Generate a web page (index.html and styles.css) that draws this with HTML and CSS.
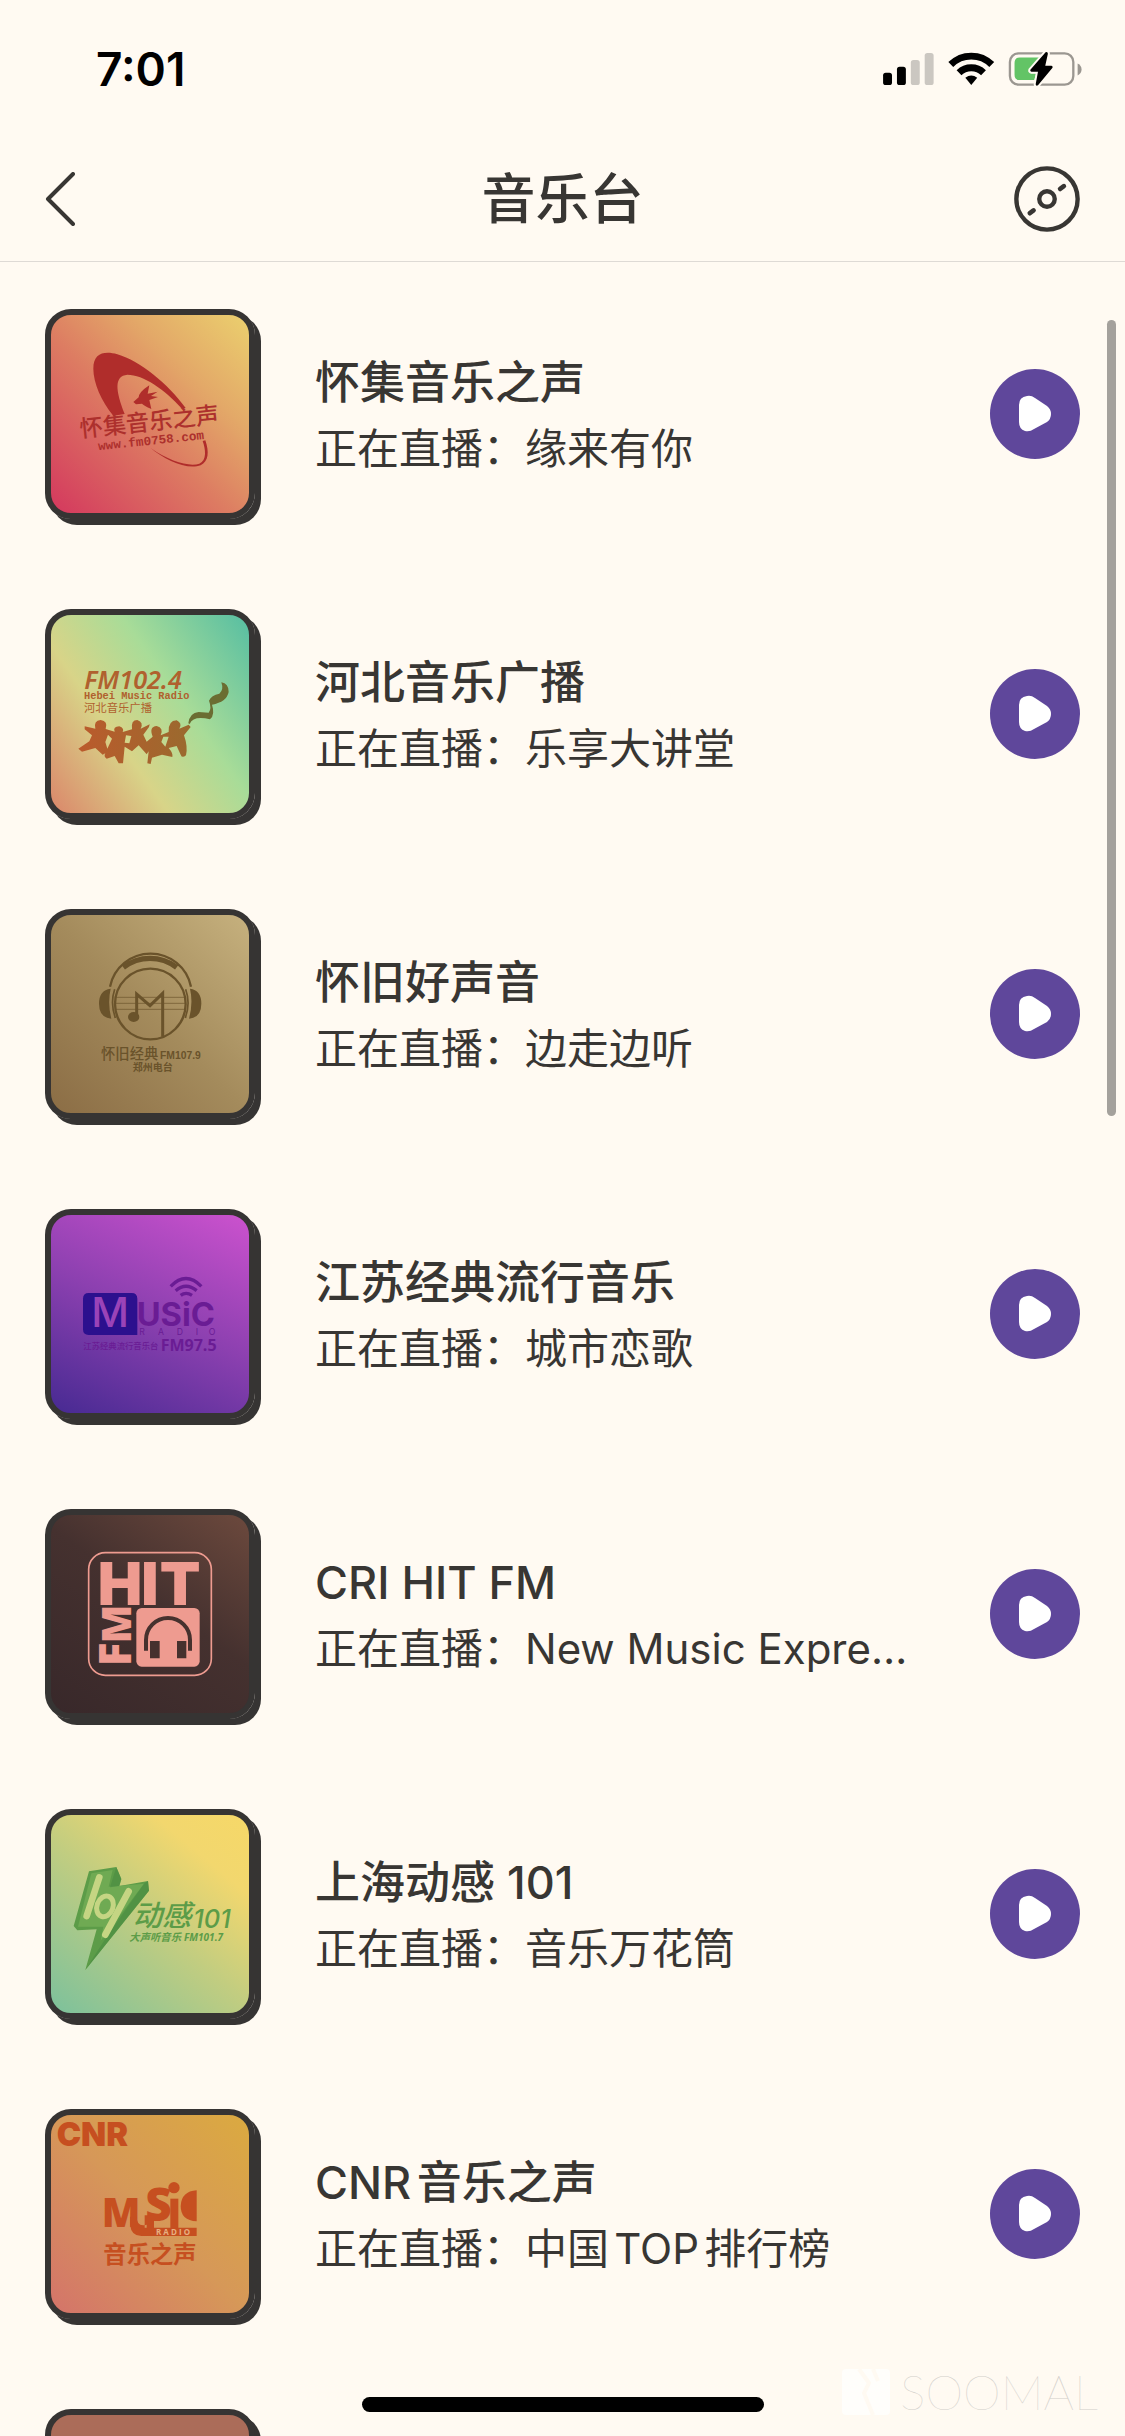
FILE: index.html
```html
<!DOCTYPE html>
<html lang="zh-CN">
<head>
<meta charset="utf-8">
<meta name="viewport" content="width=device-width, initial-scale=1">
<title>音乐台</title>
<link rel="stylesheet" href="styles.css">
</head>
<body>
<div class="screen">
  <div class="status-bar">
    <span class="time">7:01</span>
    <svg class="status-icons" viewBox="66 62 602 109" aria-hidden="true">
      <rect x="66" y="128" width="27" height="37" rx="8"/>
      <rect x="108" y="110" width="27" height="55" rx="8"/>
      <rect x="150" y="89" width="27" height="76" rx="8" fill="#cbc7c1"/>
      <rect x="192" y="68" width="27" height="97" rx="8" fill="#cbc7c1"/>
      <g fill="none" stroke="#000" stroke-width="21">
        <path d="M271 103A88 88 0 0 1 395 103"/>
        <path d="M296 128A53 53 0 0 1 370 128"/>
      </g>
      <path d="M315 143Q333 130 351 143L333 165Z"/>
      <rect x="450" y="69" width="192" height="95" rx="26" fill="none" stroke="#9b9791" stroke-width="7"/>
      <path d="M655 100Q667 106 667 118Q667 130 655 136Z" fill="#9b9791"/>
      <path d="M480 82H541L509 122L515 129H530L524 150H480Q464 150 464 134V98Q464 82 480 82Z" fill="#63c466"/>
      <path d="M558 66L512 119Q510 124 515 125H535L528 163Q529 170 535 166L579 113Q581 108 576 107H557L565 70Q564 62 558 66Z" stroke="#fffaf2" stroke-width="12" paint-order="stroke"/>
    </svg>
  </div>
  <header class="nav">
    <button class="icon-button" type="button" aria-label="返回">
      <svg class="back-icon" viewBox="0 0 30 54"><path d="M28 2L3 27L28 52" fill="none" stroke="#383633" stroke-width="4" stroke-linecap="round" stroke-linejoin="round"/></svg>
    </button>
    <h1>音乐台</h1>
    <button class="icon-button" type="button" aria-label="正在播放">
      <svg class="disc-icon" viewBox="0 0 196 196"><g fill="none" stroke="#383633" stroke-width="13" stroke-linecap="round"><circle cx="98" cy="98" r="91"/><circle cx="98" cy="98" r="23"/><path d="M137 68L148 60M47 140L58 132" stroke-width="14"/></g></svg>
    </button>
  </header>

  <main>
    <ul class="stations">
      <li class="station">
        <svg class="cover cover-huaiji" viewBox="63 75 594 594" role="img" aria-label="怀集音乐之声">
          <g fill="#b02d2b">
            <path d="M190 236C190 190 222 182 262 193C330 212 414 282 467 354L456 356C404 298 340 254 292 254C252 258 256 300 284 372L250 377C214 334 190 278 190 236Z"/>
            <path d="M310 336L326 322Q327 306 358 286L353 311L383 305L363 318L384 321L358 330L364 357Q341 346 336 341L318 343Z"/>
            <path d="M362 474C420 515 478 531 508 521C531 511 527 479 518 453L526 451C538 486 536 514 512 526C470 541 405 510 362 474Z"/>
          </g>
          <g fill="#ad302d" transform="rotate(-6 152 448)">
            <text class="cjk medium" x="152" y="442" font-size="70">怀集音乐之声</text>
            <text class="mono bold" x="202" y="486" font-size="38">www.fm0758.com</text>
          </g>
        </svg>
        <div class="info"><h2>怀集音乐之声</h2><p>正在直播：缘来有你</p></div>
        <button class="play" type="button" aria-label="播放怀集音乐之声"><svg viewBox="0 0 90 90"><path d="M29 27Q29 19 37 18Q41 17 45 20L57 28Q61 31 61 36Q61 41 57 44L44 51Q40 54 35 53Q29 51 29 44Z" transform="translate(0 9)"/></svg></button>
      </li>
      <li class="station">
        <svg class="cover cover-hebei" viewBox="63 75 594 594" role="img" aria-label="河北音乐广播">
          <defs><linearGradient id="crowd"><stop offset="0" stop-color="#bb5a2c"/><stop offset="1" stop-color="#9a6a2e"/></linearGradient></defs>
          <g fill="#b0612e">
            <text class="hand" x="163" y="297" font-size="76">FM102.4</text>
            <text class="mono bold" x="162" y="328" font-size="31">Hebei Music Radio</text>
            <text class="cjk" x="162" y="366" font-size="34">河北音乐广播</text>
          </g>
          <path fill="url(#crowd)" d="M164 409L196 416Q190 392 212 390Q235 393 227 417L254 425Q248 410 268 409Q284 415 278 426L306 418Q302 390 322 390Q342 397 332 416L359 403L357 411L340 434L350 455L368 440Q356 410 380 408Q402 414 392 436L416 426Q414 392 440 391Q458 400 448 416L476 404L482 411L462 436Q474 470 468 496Q456 506 452 494L440 468L416 474Q430 490 427 501L396 494L366 503L362 522L352 520L356 484L350 493L326 466L306 484L284 470L279 520L266 520L254 498L230 506Q220 500 226 490L218 494L196 474L156 485L145 476L178 454L186 436L164 418ZM234 434L226 456L232 476L246 446ZM288 436L284 458L298 460L304 438ZM400 440L394 456L406 470L416 440Z" fill-rule="evenodd"/>
          <path fill="#6b6d32" d="M475 400Q479 368 506 366L536 368Q546 355 537 332Q544 316 568 311Q582 300 574 277Q596 280 596 306Q590 336 546 344Q556 374 540 388Q490 376 479 402Z"/>
        </svg>
        <div class="info"><h2>河北音乐广播</h2><p>正在直播：乐享大讲堂</p></div>
        <button class="play" type="button" aria-label="播放河北音乐广播"><svg viewBox="0 0 90 90"><path d="M29 27Q29 19 37 18Q41 17 45 20L57 28Q61 31 61 36Q61 41 57 44L44 51Q40 54 35 53Q29 51 29 44Z" transform="translate(0 9)"/></svg></button>
      </li>
      <li class="station">
        <svg class="cover cover-huaijiu" viewBox="63 75 594 594" role="img" aria-label="怀旧好声音">
          <g fill="none" stroke="#6a532b">
            <circle cx="361" cy="342" r="106" stroke-width="7"/>
            <path d="M240 290A124 124 0 0 1 483 290" stroke-width="7"/>
            <path d="M280 232A132 132 0 0 1 440 232" stroke-width="16"/>
            <path d="M256 322H466M256 340H466M256 358H466" stroke-width="2"/>
            <path d="M320 380V312L360 347L398 310V440" stroke-width="9"/>
            <path d="M254 298Q240 340 256 384M467 298Q482 340 466 384" stroke-width="5"/>
          </g>
          <g fill="#6a532b">
            <ellipse cx="311" cy="381" rx="17" ry="15"/>
            <path d="M242 296Q207 300 207 341Q207 383 244 386Q232 340 242 296ZM480 296Q514 300 514 341Q514 383 477 386Q490 340 480 296Z"/>
            <text class="cjk medium" x="213" y="507" font-size="43">怀旧经典</text>
            <text class="dense bold" x="390" y="507" font-size="31">FM107.9</text>
            <text class="cjk bold" x="308" y="542" font-size="30">郑州电台</text>
          </g>
        </svg>
        <div class="info"><h2>怀旧好声音</h2><p>正在直播：边走边听</p></div>
        <button class="play" type="button" aria-label="播放怀旧好声音"><svg viewBox="0 0 90 90"><path d="M29 27Q29 19 37 18Q41 17 45 20L57 28Q61 31 61 36Q61 41 57 44L44 51Q40 54 35 53Q29 51 29 44Z" transform="translate(0 9)"/></svg></button>
      </li>
      <li class="station">
        <svg class="cover cover-jiangsu" viewBox="63 75 594 594" role="img" aria-label="江苏经典流行音乐">
          <path d="M176 309H305Q322 309 322 326V435H176Q159 435 159 418V326Q159 309 176 309Z" fill="#2c108e"/>
          <text class="inter medium" x="184" y="412" font-size="124" fill="#9a43b8">M</text>
          <g fill="#6a1c94">
            <text class="inter bold" x="320" y="409" font-size="98">USiC</text>
            <g class="inter" font-size="26">
              <text x="328" y="435">R</text>
              <text x="384" y="435">A</text>
              <text x="440" y="435">D</text>
              <text x="497" y="435">I</text>
              <text x="536" y="435">O</text>
            </g>
            <text class="sans bold" x="392" y="482" font-size="48">FM97.5</text>
            <text class="cjk medium" x="160" y="476" font-size="25">江苏经典流行音乐台</text>
          </g>
          <g fill="none" stroke="#6a1c94" stroke-width="10"><path d="M422 289Q468 242 514 289M437 302Q468 276 500 302M452 316Q468 304 486 316"/></g>
        </svg>
        <div class="info"><h2>江苏经典流行音乐</h2><p>正在直播：城市恋歌</p></div>
        <button class="play" type="button" aria-label="播放江苏经典流行音乐"><svg viewBox="0 0 90 90"><path d="M29 27Q29 19 37 18Q41 17 45 20L57 28Q61 31 61 36Q61 41 57 44L44 51Q40 54 35 53Q29 51 29 44Z" transform="translate(0 9)"/></svg></button>
      </li>
      <li class="station">
        <svg class="cover cover-hit" viewBox="63 75 594 594" role="img" aria-label="CRI HIT FM">
          <rect x="176" y="188" width="368" height="368" rx="50" fill="none" stroke="#ee9b90" stroke-width="5"/>
          <g class="inter heavy" fill="#ee9b90" text-anchor="middle">
            <text x="270" y="344" font-size="178">H</text>
            <text x="360" y="344" font-size="178">I</text>
            <text x="450" y="344" font-size="178">T</text>
            <text class="sans" transform="translate(304 493) rotate(-90)" font-size="132">F</text>
            <text class="sans" transform="translate(304 402) rotate(-90)" font-size="120">M</text>
          </g>
          <rect x="319" y="354" width="190" height="176" rx="16" fill="#ee9b90"/>
          <path d="M348 482V450A66 66 0 0 1 480 450V482" fill="none" stroke="#46312e" stroke-width="12"/>
          <path d="M360 453H389V505H360ZM441 453H469V505H441Z" fill="#46312e"/>
        </svg>
        <div class="info"><h2>CRI HIT FM</h2><p>正在直播：New Music Expre…</p></div>
        <button class="play" type="button" aria-label="播放CRI HIT FM"><svg viewBox="0 0 90 90"><path d="M29 27Q29 19 37 18Q41 17 45 20L57 28Q61 31 61 36Q61 41 57 44L44 51Q40 54 35 53Q29 51 29 44Z" transform="translate(0 9)"/></svg></button>
      </li>
      <li class="station">
        <svg class="cover cover-donggan" viewBox="63 75 594 594" role="img" aria-label="上海动感101">
          <path fill="#5c9c48" d="M177 244L259 231L274 267L268 288L354 273L357 302L166 540L200 418L142 421L131 408Z"/>
          <path fill="#6faa53" d="M184 250L248 240L236 290L342 281L212 452L220 410L144 410Z"/>
          <path fill="#4a8c42" d="M259 231L274 267L268 288L240 292ZM342 281L354 273L357 302L166 540L230 440Z" opacity=".6"/>
          <path d="M208 262L170 378M296 304L226 434" fill="none" stroke="#c5d583" stroke-width="20" stroke-linecap="round"/>
          <ellipse cx="225" cy="349" rx="24" ry="32" fill="none" stroke="#c5d583" stroke-width="15" transform="rotate(20 225 349)"/>
          <g fill="#5c9c48">
            <text class="cjk medium slant" x="308" y="409" font-size="88">动感</text>
            <text class="inter medium slant" x="490" y="415" font-size="76">101</text>
            <text class="cjk bold slant" x="298" y="453" font-size="31">大声听音乐</text>
            <text class="sans bold slant" x="462" y="453" font-size="30">FM101.7</text>
          </g>
        </svg>
        <div class="info"><h2>上海动感 101</h2><p>正在直播：音乐万花筒</p></div>
        <button class="play" type="button" aria-label="播放上海动感101"><svg viewBox="0 0 90 90"><path d="M29 27Q29 19 37 18Q41 17 45 20L57 28Q61 31 61 36Q61 41 57 44L44 51Q40 54 35 53Q29 51 29 44Z" transform="translate(0 9)"/></svg></button>
      </li>
      <li class="station">
        <svg class="cover cover-cnr" viewBox="63 75 594 594" role="img" aria-label="CNR音乐之声">
          <g fill="#c64f20">
            <text class="inter heavy" x="80" y="169" font-size="98">CNR</text>
            <text class="sans heavy" x="215" y="411" font-size="120">M</text>
            <text class="sans heavy" x="346" y="392" font-size="138">S</text>
            <path d="M300 380V404Q304 438 334 438H500V413H344V376H372V413H350V404Q320 412 320 380Z"/>
            <rect x="421" y="326" width="24" height="88"/>
            <circle cx="432" cy="293" r="17"/>
            <path d="M500 301V394Q452 392 452 348Q454 304 500 301Z"/>
            <text class="cjk bold" x="220" y="520" font-size="70">音乐之声</text>
          </g>
          <text class="sans bold" x="378" y="434" font-size="24" fill="#e8b080">R A D I O</text>
        </svg>
        <div class="info"><h2>CNR音乐之声</h2><p>正在直播：中国TOP排行榜</p></div>
        <button class="play" type="button" aria-label="播放CNR音乐之声"><svg viewBox="0 0 90 90"><path d="M29 27Q29 19 37 18Q41 17 45 20L57 28Q61 31 61 36Q61 41 57 44L44 51Q40 54 35 53Q29 51 29 44Z" transform="translate(0 9)"/></svg></button>
      </li>
      <li class="station"><div class="cover cover-next"></div></li>
    </ul>
  </main>

  <div class="scroll-thumb"></div>
  <div class="home-indicator"></div>
  <div class="watermark" aria-hidden="true">
    <svg viewBox="0 0 48 46"><rect width="48" height="46" rx="4" fill="#fff" opacity=".7"/><path d="M17 0L27 14L22 24L31 46M31 0L36 12" fill="none" stroke="#fffaf2" stroke-width="4"/></svg>
    <span>SOOMAL</span>
  </div>
</div>
</body>
</html>
```
FILE: styles.css
```css
* { box-sizing: border-box; margin: 0; padding: 0; }

body {
  background: #fffaf2;
  color: #383633;
  font-family: Inter, "Noto Sans CJK SC", sans-serif;
  text-autospace: normal;
}

button { border: 0; background: none; color: inherit; display: block; cursor: pointer; }
svg { display: block; }

.screen { position: relative; height: 100vh; overflow: hidden; }

.status-bar {
  height: 134px;
  padding: 4px 42px 0 96px;
  display: flex;
  align-items: center;
  justify-content: space-between;
}
.time { font-size: 46px; font-weight: 600; color: #000; }
.status-icons { width: 201px; height: 36px; }

.nav {
  height: 128px;
  padding: 2px 45px 0;
  display: grid;
  grid-template-columns: 66px 1fr 66px;
  align-items: center;
  border-bottom: 1px solid #dedad5;
}
.nav h1 { padding-top: 2px; font-size: 54px; line-height: 80px; font-weight: 500; text-align: center; }
.back-icon { width: 30px; height: 54px; }
.disc-icon { width: 66px; height: 66px; }

.stations { list-style: none; padding-top: 2px; }
.station {
  height: 300px;
  padding: 0 45px;
  display: flex;
  align-items: center;
}
.cover {
  flex: none;
  width: 210px;
  height: 210px;
  border: 6px solid #363433;
  border-radius: 26px;
  box-shadow: 6px 6px 0 #363433;
}
.cover-huaiji { background: linear-gradient(45deg, #d4385e, #dd7c62 45%, #e3a868 70%, #ebd06e); }
.cover-hebei { background: linear-gradient(55deg, #db866a, #d8d488 35%, #a8dc98 62%, #56bea2); }
.cover-huaijiu { background: linear-gradient(45deg, #8b6d45, #a48b5c 50%, #c6b17e); }
.cover-jiangsu { background: linear-gradient(25deg, #472a92, #8c40b0 50%, #cc52ce); }
.cover-hit { background: linear-gradient(35deg, #38282a, #45312f 55%, #6c493d); }
.cover-donggan { background: linear-gradient(40deg, #7cc19c, #c2cd80 48%, #f2d76e 78%, #f6d868); }
.cover-cnr { background: linear-gradient(45deg, #d4746a, #d69858 50%, #dbaa40); }
.cover-next { background: #ab6c59; }

.cjk { font-family: "Noto Sans CJK SC", sans-serif; }
.inter { font-family: Inter, sans-serif; }
.sans { font-family: "Open Sans", sans-serif; }
.mono { font-family: "Liberation Mono", monospace; }
.hand { font-family: "Noto Sans", sans-serif; font-style: italic; font-weight: 600; }
.dense { font-family: "Liberation Sans", sans-serif; }
.medium { font-weight: 500; }
.bold { font-weight: 700; }
.heavy { font-weight: 900; }
.slant { font-style: italic; }

.info { flex: 1; margin: 0 48px 0 60px; padding-top: 3px; min-width: 0; }
.info h2, .info p { line-height: 66px; white-space: nowrap; overflow: hidden; text-overflow: ellipsis; }
.info h2 { font-size: 45px; font-weight: 500; }
.info p { font-size: 42px; }

.play { flex: none; width: 90px; height: 90px; border-radius: 50%; background: #5f479b; }
.play svg { width: 90px; height: 90px; fill: #fff; }

.scroll-thumb {
  position: absolute;
  top: 320px;
  right: 9px;
  width: 9px;
  height: 796px;
  border-radius: 5px;
  background: #a4a19c;
}
.home-indicator {
  position: absolute;
  left: 50%;
  bottom: 24px;
  width: 402px;
  height: 15px;
  margin-left: -201px;
  border-radius: 8px;
  background: #000;
}
.watermark {
  position: absolute;
  right: 27px;
  bottom: 14px;
  display: flex;
  align-items: center;
  gap: 10px;
  font: 100 48px/60px Lato, sans-serif;
  color: #d2cfca;
}
.watermark svg { width: 48px; height: 46px; }
```
